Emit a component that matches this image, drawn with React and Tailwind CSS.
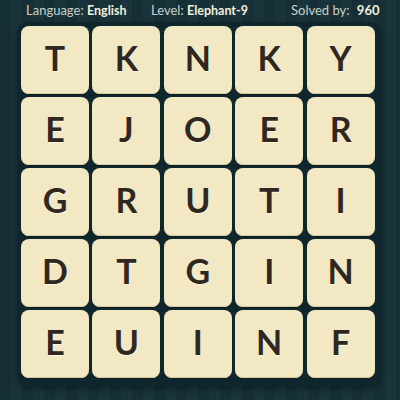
import React from 'react';

const rows = ['TKNKY', 'EJOER', 'GRUTI', 'DTGIN', 'EUINF'];

const Tile = ({ letter }) => (
  <div className="w-[68px] h-[68px] rounded-[8px] bg-[#f2e9c4] shadow-[inset_0_-1px_0_#d8cda2,0_1px_0_#0b1d22] flex items-center justify-center pb-[4px]">
    <span className="text-[34px] font-bold leading-none text-[#2f2721] [text-shadow:0_1px_0_#fff8dc]">{letter}</span>
  </div>
);

const App = () => {
  return (
    <div className="w-[400px] h-[400px] overflow-hidden font-['Lato',sans-serif] bg-[repeating-linear-gradient(90deg,#162f37_0px,#162f37_11px,#1a343c_11px,#1a343c_22px)]">
      {/* Header */}
      <div className="h-[22px] flex items-center text-[13px] text-[#c9cfc6]">
        <div className="pl-[26px] w-[151px]">
          Language: <span className="font-bold text-[12.5px] text-[#f1efdc]">English</span>
        </div>
        <div className="w-[140px]">
          Level: <span className="font-bold text-[12.5px] text-[#f1efdc]">Elephant-9</span>
        </div>
        <div>
          Solved by: <span className="font-bold text-[13px] text-[#f1efdc] ml-[4px]">960</span>
        </div>
      </div>

      {/* Board */}
      <div className="ml-[17px] w-[364px] rounded-[12px] bg-[#0f262c] pt-[4px] pl-[4px] pr-[6px] pb-[8px] shadow-[0_3px_6px_rgba(0,0,0,0.35)]">
        <div className="grid grid-cols-5 gap-x-[3px] gap-y-[3px]">
          {rows.map((row, r) =>
            row.split('').map((ch, c) => <Tile key={`${r}-${c}`} letter={ch} />)
          )}
        </div>
      </div>
    </div>
  );
};

export default App;
